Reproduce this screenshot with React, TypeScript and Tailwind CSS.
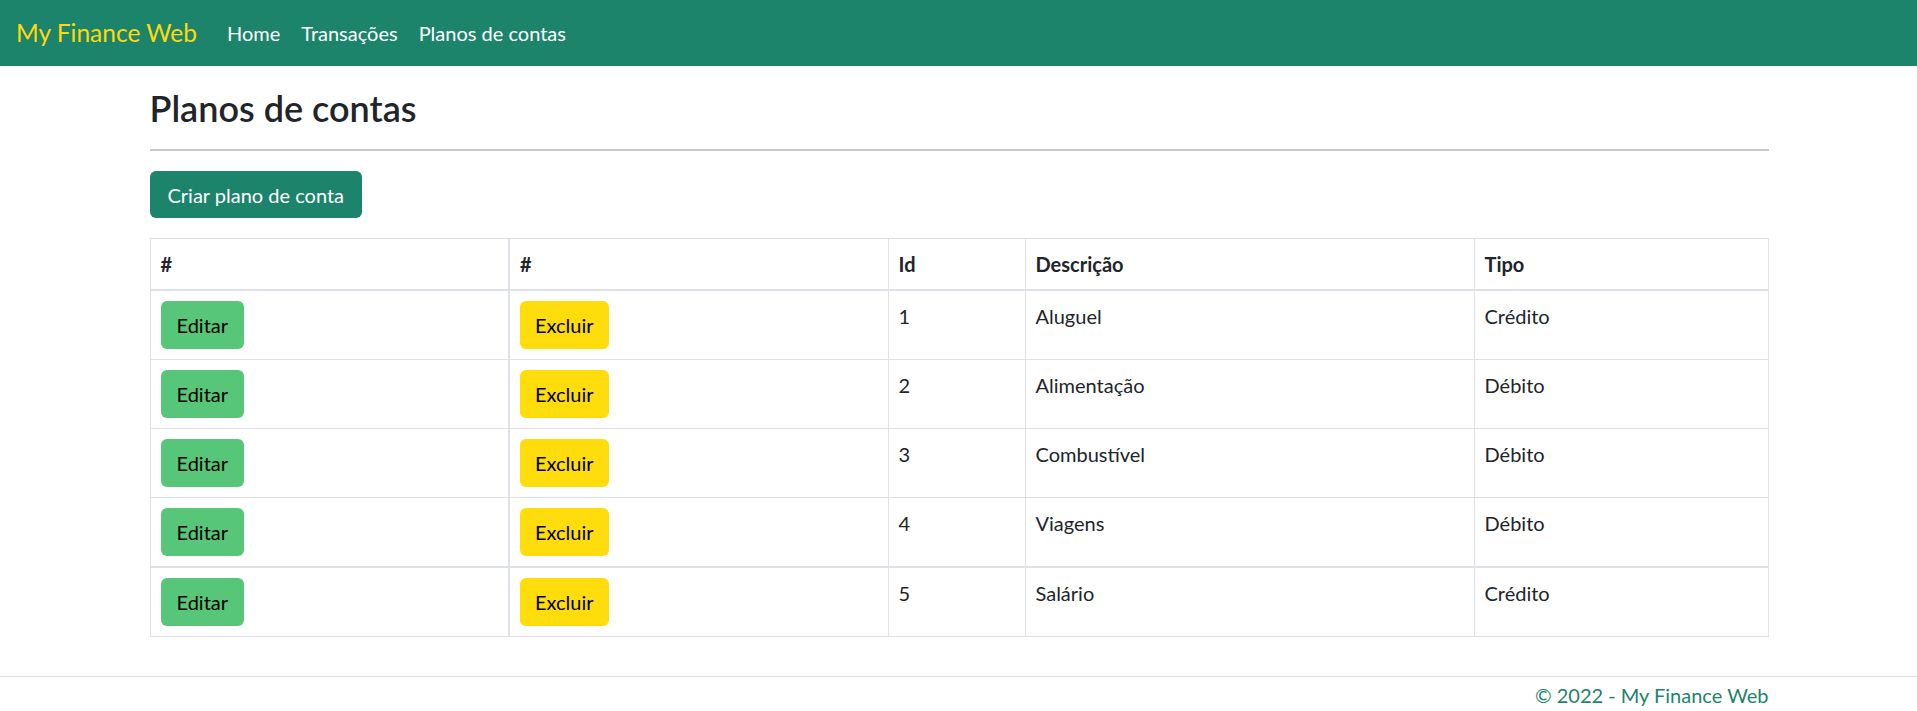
const rows = [
  { id: 1, descricao: "Aluguel", tipo: "Crédito" },
  { id: 2, descricao: "Alimentação", tipo: "Débito" },
  { id: 3, descricao: "Combustível", tipo: "Débito" },
  { id: 4, descricao: "Viagens", tipo: "Débito" },
  { id: 5, descricao: "Salário", tipo: "Crédito" },
];

function NavBar() {
  return (
    <nav className="h-[66px] bg-[#1c846a] flex items-center px-[16px]">
      <span className="text-[24.5px] text-[#ffd90d] leading-[36px] mr-[30px]">My Finance Web</span>
      <div className="flex items-center gap-[21px] text-[20px] text-white leading-[30px]">
        <a href="#">Home</a>
        <a href="#">Transações</a>
        <a href="#">Planos de contas</a>
      </div>
    </nav>
  );
}

export default function App() {
  return (
    <div className="min-h-[711px] bg-white text-[#212529] font-['Lato','Liberation_Sans',sans-serif] flex flex-col">
      <NavBar />
      <main className="w-[1620px] mx-auto pl-[1px] pt-[21px] pb-[39px]">
        <h2 className="text-[36px] leading-[43px] font-semibold">Planos de contas</h2>
        <hr className="mt-[19px] border-0 border-t-2 border-[#c8c8c8]" />
        <button className="mt-[20px] h-[47px] px-[18px] rounded-[6px] bg-[#1c846a] text-white text-[20px] leading-[30px]">
          Criar plano de conta
        </button>
        <table className="mt-[20px] w-full table-fixed border-collapse text-[20px] leading-[30px]">
          <colgroup>
            <col className="w-[359px]" />
            <col className="w-[379px]" />
            <col className="w-[137px]" />
            <col className="w-[449px]" />
            <col />
          </colgroup>
          <thead>
            <tr className="border-b-2 border-[#dee2e6]">
              <th className="text-left font-bold px-[10px] py-[10px] border border-[#dee2e6] border-r-2">#</th>
              <th className="text-left font-bold px-[10px] py-[10px] border border-[#dee2e6]">#</th>
              <th className="text-left font-bold px-[10px] py-[10px] border border-[#dee2e6]">Id</th>
              <th className="text-left font-bold px-[10px] py-[10px] border border-[#dee2e6]">Descrição</th>
              <th className="text-left font-bold px-[10px] py-[10px] border border-[#dee2e6]">Tipo</th>
            </tr>
          </thead>
          <tbody>
            {rows.map((r) => (
              <tr key={r.id} className={r.id === 4 ? "border-b-2 border-[#dee2e6]" : ""}>
                <td className="align-top px-[10px] py-[10px] border border-[#dee2e6] border-r-2">
                  <button className="h-[48px] px-[16px] rounded-[6px] bg-[#57c678] text-black text-[20px] leading-[30px]">
                    Editar
                  </button>
                </td>
                <td className="align-top px-[10px] py-[10px] border border-[#dee2e6]">
                  <button className="h-[48px] px-[15px] rounded-[6px] bg-[#ffdd0c] text-black text-[20px] leading-[30px]">
                    Excluir
                  </button>
                </td>
                <td className="align-top px-[10px] py-[10px] border border-[#dee2e6]">{r.id}</td>
                <td className="align-top px-[10px] py-[10px] border border-[#dee2e6]">{r.descricao}</td>
                <td className="align-top px-[10px] py-[10px] border border-[#dee2e6]">{r.tipo}</td>
              </tr>
            ))}
          </tbody>
        </table>
      </main>
      <footer className="border-t border-[#dee2e6]">
        <div className="w-[1620px] mx-auto text-right pt-[3px] text-[20px] leading-[30px] text-[#1c846a]">
          © 2022 - My Finance Web
        </div>
      </footer>
    </div>
  );
}
